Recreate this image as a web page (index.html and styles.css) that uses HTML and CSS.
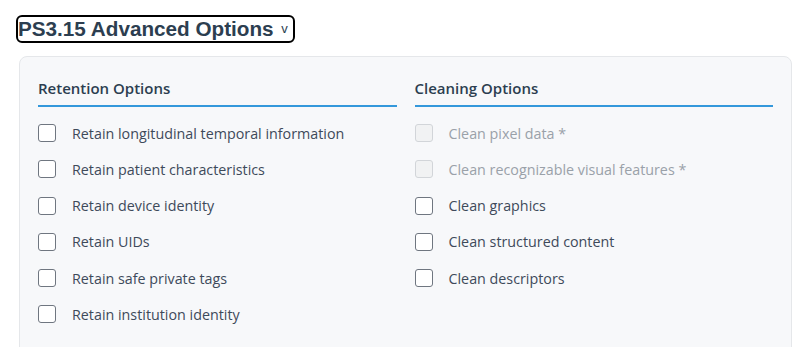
FILE: index.html
```html
<!DOCTYPE html>
<html>
<head>
<meta charset="utf-8">
<link rel="stylesheet" href="styles.css">
</head>
<body>
<div class="page">
  <details class="adv" open>
    <summary class="adv-summary">PS3.15 Advanced Options <span class="caret">v</span></summary>
    <div class="panel">
      <section class="group">
        <h3 class="group-title">Retention Options</h3>
        <ul class="opts">
          <li class="opt"><span class="box"></span><span class="lbl">Retain longitudinal temporal information</span></li>
          <li class="opt"><span class="box"></span><span class="lbl">Retain patient characteristics</span></li>
          <li class="opt"><span class="box"></span><span class="lbl">Retain device identity</span></li>
          <li class="opt"><span class="box"></span><span class="lbl">Retain UIDs</span></li>
          <li class="opt"><span class="box"></span><span class="lbl">Retain safe private tags</span></li>
          <li class="opt"><span class="box"></span><span class="lbl">Retain institution identity</span></li>
        </ul>
      </section>
      <section class="group">
        <h3 class="group-title">Cleaning Options</h3>
        <ul class="opts">
          <li class="opt disabled"><span class="box"></span><span class="lbl">Clean pixel data *</span></li>
          <li class="opt disabled"><span class="box"></span><span class="lbl">Clean recognizable visual features *</span></li>
          <li class="opt"><span class="box"></span><span class="lbl">Clean graphics</span></li>
          <li class="opt"><span class="box"></span><span class="lbl">Clean structured content</span></li>
          <li class="opt"><span class="box"></span><span class="lbl">Clean descriptors</span></li>
        </ul>
      </section>
    </div>
  </details>
</div>
</body>
</html>
```

FILE: styles.css
```css
* { box-sizing: border-box; }
html, body { margin: 0; padding: 0; background: #ffffff; }
.page {
  padding: 17px 13px 0 19px;
  font-family: "Open Sans", "Noto Sans", sans-serif;
}
.adv-summary {
  display: inline-block;
  list-style: none;
  font-family: "Liberation Sans", Arial, sans-serif;
  font-weight: bold;
  font-size: 20.7px;
  line-height: 24px;
  color: #2c3e50;
  outline: 2px solid #000;
  border-radius: 4px;
  padding: 0 5px 0 0;
  margin-left: -1px;
  cursor: pointer;
}
.adv-summary::-webkit-details-marker { display: none; }
.caret {
  font-size: 13px;
  font-weight: normal;
  vertical-align: 3px;
  margin-left: 2px;
}
.panel {
  margin-top: 15px;
  background: #f7f8fa;
  border: 1px solid #e5e7ea;
  border-radius: 8px;
  padding: 20px 18px 20px 18px;
  display: grid;
  grid-template-columns: 1fr 1fr;
  column-gap: 18px;
  min-height: 300px;
}
.group-title {
  margin: 0;
  font-size: 15px;
  font-weight: 600;
  line-height: 22px;
  color: #2c3e50;
  padding-bottom: 6px;
  border-bottom: 2px solid #3498db;
}
.opts {
  list-style: none;
  margin: 17px 0 0 0;
  padding: 0;
  display: flex;
  flex-direction: column;
  gap: 18.25px;
}
.opt {
  display: flex;
  align-items: center;
  gap: 16px;
  height: 18px;
  font-size: 14.3px;
  color: #3e4a5a;
}
.box {
  width: 18px;
  height: 18px;
  flex: none;
  background: #ffffff;
  border: 1px solid #6f7680;
  border-radius: 3px;
}
.opt.disabled { color: #9aa1a9; }
.opt.disabled .box {
  background: #f1f2f3;
  border-color: #d2d5d9;
}
```
